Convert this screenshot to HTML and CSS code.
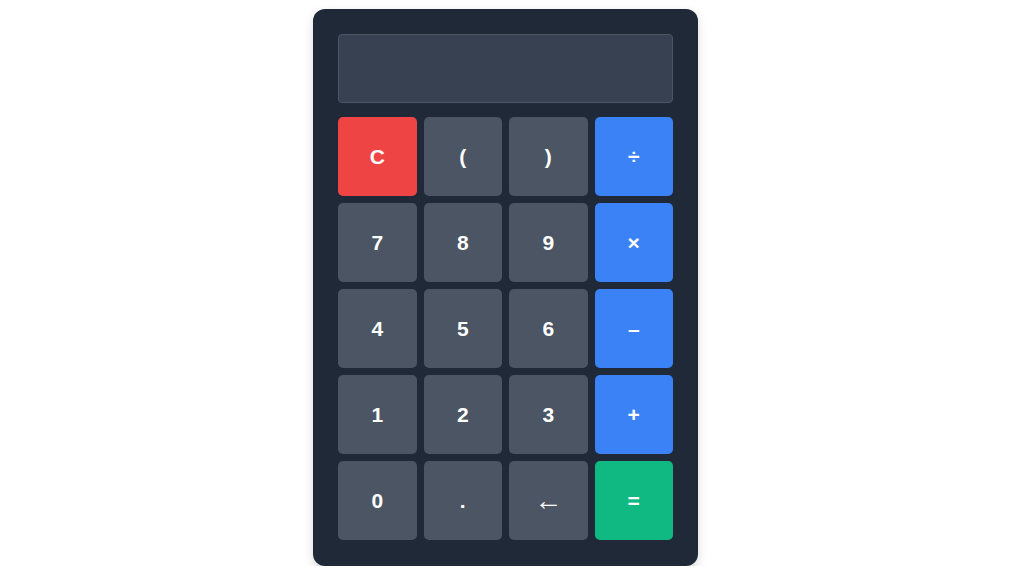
FILE: index.html
```html
<!DOCTYPE html>
<html>
<head>
<meta charset="utf-8">
<link rel="stylesheet" href="styles.css">
</head>
<body>
<div class="calc">
  <div class="display"></div>
  <div class="keys">
    <button class="key red">C</button>
    <button class="key">(</button>
    <button class="key">)</button>
    <button class="key blue">÷</button>
    <button class="key">7</button>
    <button class="key">8</button>
    <button class="key">9</button>
    <button class="key blue">×</button>
    <button class="key">4</button>
    <button class="key">5</button>
    <button class="key">6</button>
    <button class="key blue">–</button>
    <button class="key">1</button>
    <button class="key">2</button>
    <button class="key">3</button>
    <button class="key blue">+</button>
    <button class="key">0</button>
    <button class="key">.</button>
    <button class="key arrow">←</button>
    <button class="key green">=</button>
  </div>
</div>
</body>
</html>
```
FILE: styles.css
```css
html, body {
  margin: 0;
  padding: 0;
  background: #ffffff;
}
body {
  font-family: "Liberation Sans", Arial, sans-serif;
}
.calc {
  box-sizing: border-box;
  width: 385px;
  height: 557px;
  margin: 9px 0 0 313px;
  padding: 25px;
  background: #1f2937;
  border-radius: 12px;
  box-shadow: 0 4px 10px rgba(0, 0, 0, 0.15);
}
.display {
  box-sizing: border-box;
  height: 69px;
  background: #374151;
  border: 1px solid #4b5563;
  border-radius: 4px;
  margin-bottom: 14px;
}
.keys {
  display: grid;
  grid-template-columns: repeat(4, 1fr);
  grid-auto-rows: 79px;
  column-gap: 7px;
  row-gap: 7px;
}
.key {
  border: none;
  border-radius: 5px;
  background: #4b5563;
  color: #ffffff;
  font-family: "Liberation Sans", Arial, sans-serif;
  font-weight: bold;
  font-size: 21px;
  padding: 0;
}
.key.red { background: #ef4444; }
.key.blue { background: #3b82f6; }
.key.green { background: #10b981; }
.key.arrow {
  font-weight: normal;
  font-size: 28px;
}
```
